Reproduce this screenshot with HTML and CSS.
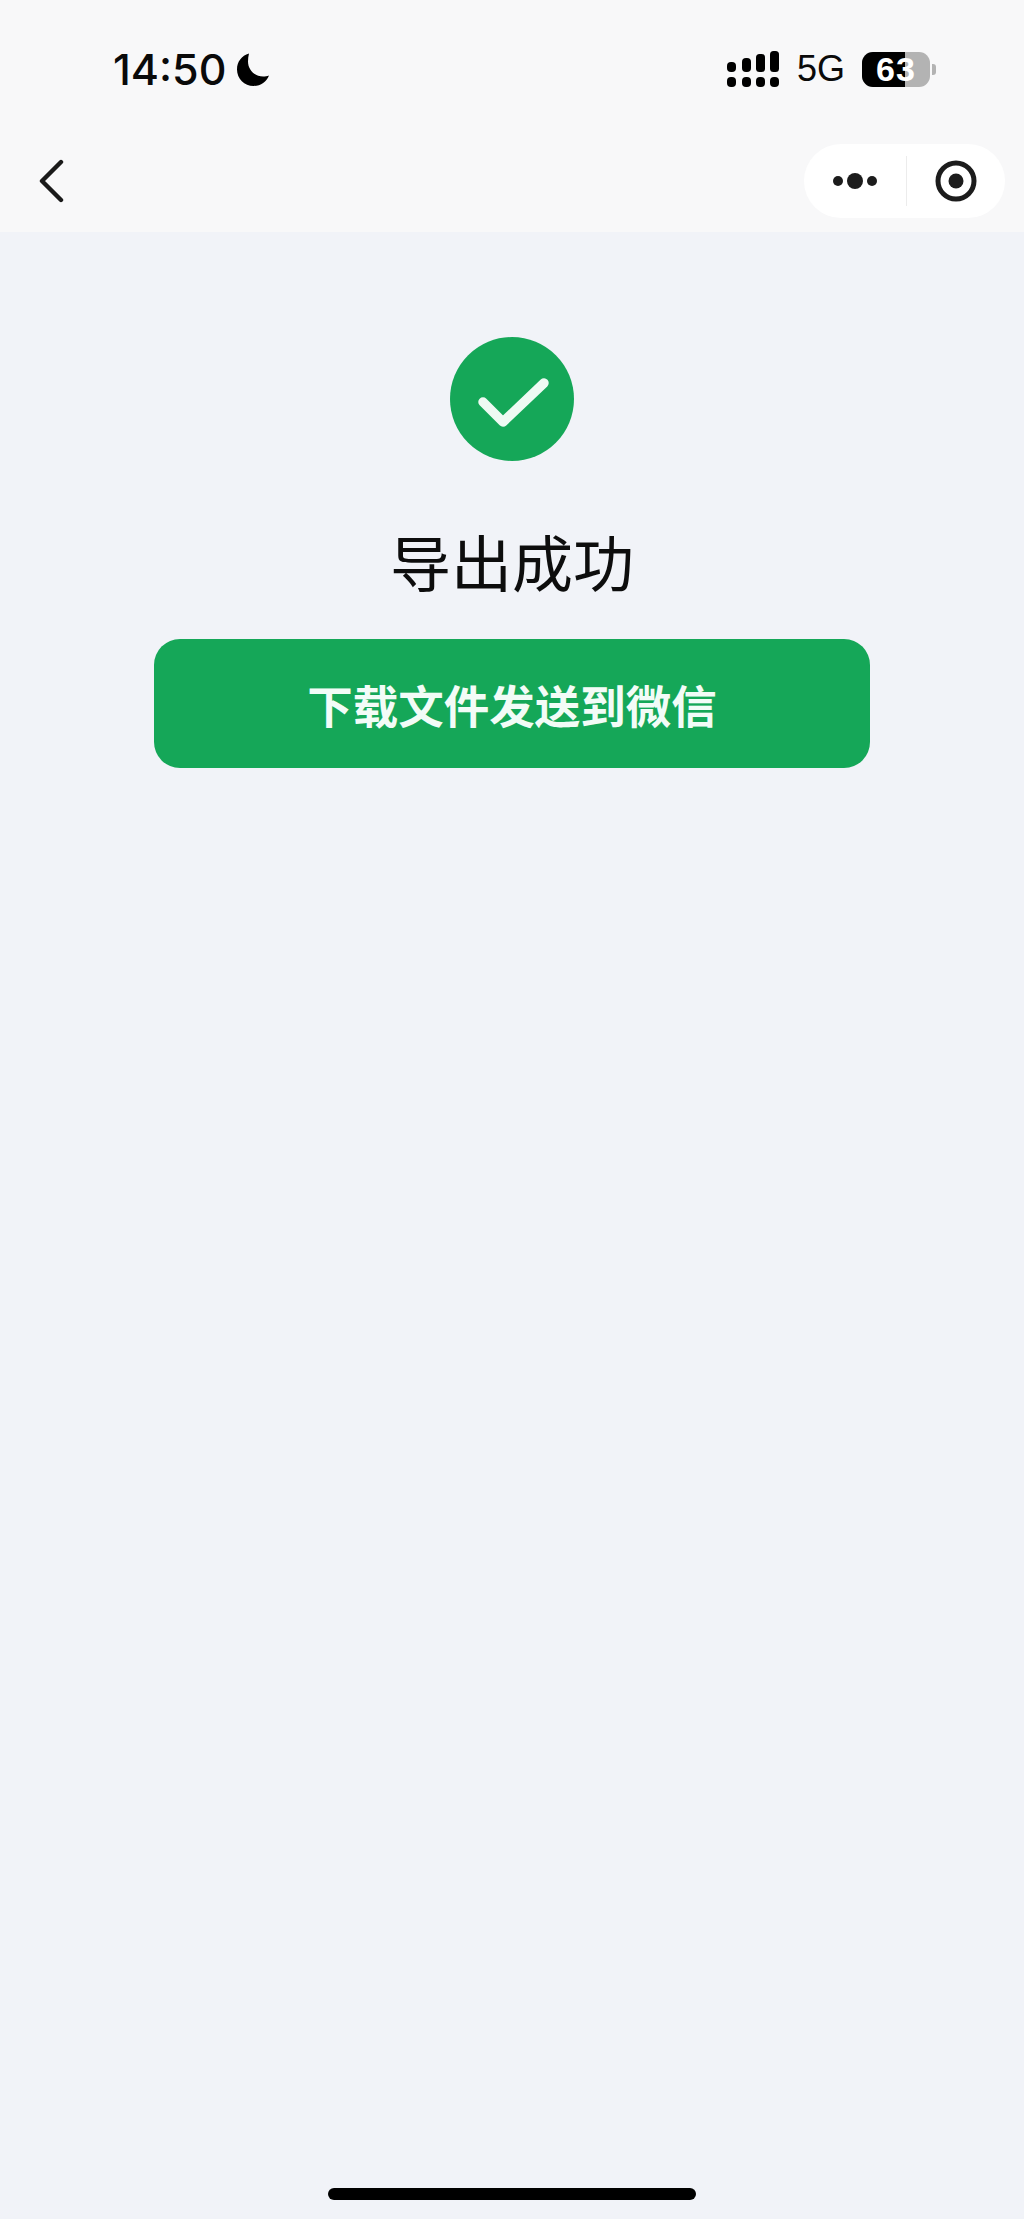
FILE: index.html
```html
<!DOCTYPE html>
<html lang="zh-CN">
<head>
<meta charset="utf-8">
<title>导出成功</title>
<link rel="stylesheet" href="styles.css">
</head>
<body>
<div class="page">
  <header class="top">
    <div class="status">
      <div class="status-left">
        <span class="time">14:50</span>
        <svg class="moon" viewBox="0 0 32 33"><path d="M12 0.5C4.6 2.6 0 8.8 0 16.4 0 25.5 7.4 33 16.6 33c7.2 0 12.9-4.2 15.4-10.6-1.9 .8-3.8 1.1-5.9 1.1C17.7 23.5 11 16.9 11 8.6c0-2.9.3-5.6 1-8.1z"/></svg>
      </div>
      <div class="status-right">
        <svg class="signal" viewBox="0 0 52 36">
          <rect x="0" y="11" width="9" height="10" rx="4"/><rect x="15" y="7" width="9" height="14" rx="4"/><rect x="29" y="3" width="9" height="18" rx="3.5"/><rect x="43" y="0" width="9" height="21" rx="3.5"/>
          <rect x="0" y="26" width="9" height="10" rx="4"/><rect x="15" y="26" width="9" height="10" rx="4"/><rect x="29" y="26" width="9" height="10" rx="4"/><rect x="43" y="26" width="9" height="10" rx="4"/>
        </svg>
        <span class="net">5G</span>
        <div class="battery">
          <div class="battery-body"><span class="battery-level"></span><span class="battery-text">63</span></div>
          <span class="battery-tip"></span>
        </div>
      </div>
    </div>
    <nav class="nav">
      <svg class="back" viewBox="0 0 26 44"><path d="M23 3 4 22l19 19"/></svg>
      <div class="capsule">
        <div class="cap-more"><i class="dot"></i><i class="dot big"></i><i class="dot"></i></div>
        <i class="cap-line"></i>
        <div class="cap-close"><svg class="target" viewBox="0 0 42 42"><circle class="ring" cx="21" cy="21" r="18"/><circle cx="21" cy="21" r="7.5"/></svg></div>
      </div>
    </nav>
  </header>
  <main class="main">
    <svg class="ok" viewBox="0 0 124 124"><circle class="ok-bg" cx="62" cy="62" r="62"/><path class="ok-mark" d="M33 65l20 20 41-39"/></svg>
    <h1 class="title">导出成功</h1>
    <button class="btn" type="button">下载文件发送到微信</button>
  </main>
  <div class="home"></div>
</div>
</body>
</html>
```
FILE: styles.css
```css
* { box-sizing: border-box; }
html, body { margin: 0; padding: 0; }
body {
  width: 1024px;
  height: 2219px;
  overflow: hidden;
  background: #f1f3f8;
  font-family: "Inter", "Noto Sans CJK SC", sans-serif;
  color: #0a0a0a;
}
.page { display: flex; flex-direction: column; height: 2219px; }
.top { height: 232px; background: #f8f8f9; display: flex; flex-direction: column; }
.status {
  display: flex; justify-content: space-between; align-items: flex-start;
  height: 144px; padding: 51px 88px 0 113px;
}
.status-left { display: flex; align-items: center; gap: 11px; height: 36px; }
.time { font-size: 43px; font-weight: 500; line-height: 36px; color: #0a0a0a; }
.moon { width: 32px; height: 33px; fill: #000; display: block; }
.status-right { display: flex; align-items: center; height: 36px; }
.signal { width: 52px; height: 36px; fill: #000; display: block; }
.net { font-size: 36px; line-height: 36px; margin-left: 18px; font-weight: 400; font-family: "Liberation Sans", sans-serif; }
.battery { display: flex; align-items: center; margin-left: 17px; }
.battery-body {
  position: relative; width: 68px; height: 35px; border-radius: 11px;
  background: #b3b3b3;
  display: flex; justify-content: center; align-items: center;
}
.battery-level { position: absolute; left: 0; top: 0; bottom: 0; width: 43px; background: #000; border-radius: 11px 0 0 11px; }
.battery-text { position: relative; color: #fff; font-size: 34px; letter-spacing: 1px; font-weight: 700; line-height: 40px; font-family: "Liberation Sans", sans-serif; }
.battery-tip { width: 4px; height: 11px; margin-left: 2px; background: #b3b3b3; border-radius: 0 3px 3px 0; }
.nav { height: 88px; display: flex; align-items: flex-start; justify-content: space-between; padding: 0 19px 0 38px; }
.back { width: 26px; height: 44px; margin-top: 15px; display: block; }
.back path { fill: none; stroke: #1a1a1a; stroke-width: 4.4; stroke-linecap: round; stroke-linejoin: round; }
.capsule {
  width: 201px; height: 74px; border-radius: 37px; background: #fff;
  display: flex; align-items: center;
}
.cap-more { width: 102px; display: flex; align-items: center; justify-content: center; gap: 4px; padding-left: 0; }
.dot { width: 10px; height: 10px; border-radius: 50%; background: #1c1c1c; display: block; }
.dot.big { width: 16px; height: 16px; }
.cap-line { width: 1px; height: 50px; background: #ececec; display: block; }
.cap-close { flex: 1; display: flex; justify-content: center; align-items: center; }
.target { width: 42px; height: 42px; display: block; fill: #1c1c1c; }
.ring { fill: none; stroke: #1c1c1c; stroke-width: 5; }
.main { flex: 1; display: flex; flex-direction: column; align-items: center; padding-top: 105px; }
.ok { width: 124px; height: 124px; display: block; }
.ok-bg { fill: #15a758; }
.ok-mark { fill: none; stroke: #eefaf3; stroke-width: 9.5; stroke-linecap: round; stroke-linejoin: round; }
.title { margin: 63px 0 0; font-size: 61px; font-weight: 400; line-height: 74px; color: #0d0d0d; font-family: "Noto Sans CJK SC", sans-serif; }
.btn {
  width: 716px; height: 129px; margin-top: 41px; border: 0; border-radius: 26px;
  background: #15a758; color: #f2fcf7; font-size: 45.5px; font-weight: 700;
  font-family: "Noto Sans CJK SC", sans-serif; padding: 0;
}
.home { width: 368px; height: 12px; border-radius: 6px; background: #000; align-self: center; margin-bottom: 19px; }
```
